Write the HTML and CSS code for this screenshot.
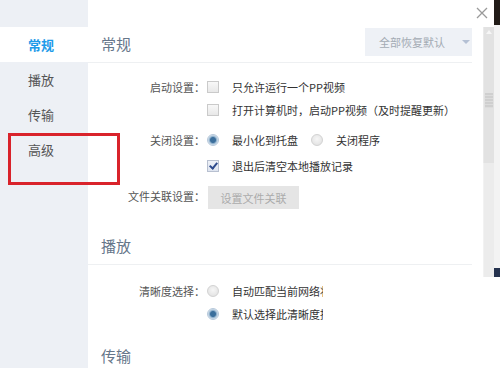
FILE: index.html
```html
<!DOCTYPE html>
<html lang="zh-CN">
<head>
  <meta charset="UTF-8" />
  <title>设置</title>
  <link rel="stylesheet" href="styles.css">
</head>
<body>
  <div class="window">
    <nav class="sidebar">
      <div class="nav-item active">常规</div>
      <div class="nav-item">播放</div>
      <div class="nav-item">传输</div>
      <div class="nav-item">高级</div>
    </nav>

    <main class="panel">
      <section class="group">
        <div class="group-head">
          <h2>常规</h2>
          <button class="reset">全部恢复默认<span class="caret"></span></button>
        </div>
        <div class="group-body">
          <div class="setting">
            <span class="label">启动设置：</span>
            <div class="opts">
              <label class="opt"><i class="box"></i>只允许运行一个PP视频</label>
              <label class="opt"><i class="box"></i>打开计算机时，启动PP视频（及时提醒更新）</label>
            </div>
          </div>
          <div class="setting">
            <span class="label">关闭设置：</span>
            <div class="opts">
              <div class="opt-line">
                <label class="opt"><i class="radio on"></i>最小化到托盘</label>
                <label class="opt"><i class="radio"></i>关闭程序</label>
              </div>
              <label class="opt spaced"><i class="box on"></i>退出后清空本地播放记录</label>
            </div>
          </div>
          <div class="setting last">
            <span class="label">文件关联设置：</span>
            <div class="opts">
              <button class="btn-gray">设置文件关联</button>
            </div>
          </div>
        </div>
      </section>

      <section class="group">
        <div class="group-head">
          <h2>播放</h2>
        </div>
        <div class="group-body play">
          <div class="setting last">
            <span class="label">清晰度选择：</span>
            <div class="opts">
              <label class="opt"><i class="radio"></i><span class="clip">自动匹配当前网络状况</span></label>
              <label class="opt"><i class="radio on"></i><span class="clip">默认选择此清晰度播放</span></label>
            </div>
          </div>
        </div>
      </section>

      <section class="group">
        <div class="group-head">
          <h2>传输</h2>
        </div>
      </section>
    </main>

    <aside class="edge">
      <div class="scrollbar">
        <div class="sb-top"></div>
        <div class="sb-track">
          <div class="sb-thumb"></div>
        </div>
        <div class="sb-rest"></div>
      </div>
      <div class="strip"></div>
    </aside>

    <svg class="close" width="12" height="12" viewBox="0 0 12 12">
      <path d="M1 1 L11 11 M11 1 L1 11" stroke="#9a9a9a" stroke-width="1.3" fill="none"/>
    </svg>
    <div class="mark"></div>
  </div>
</body>
</html>
```

FILE: styles.css
```css
html, body {
  margin: 0;
  padding: 0;
}

body {
  font-family: "Noto Sans CJK SC", "Noto Sans", sans-serif;
  background: #fff;
  color: #333;
  overflow: hidden;
}

.window {
  position: relative;
  display: flex;
  width: 500px;
  height: 368px;
  overflow: hidden;
}

/* left nav */
.sidebar {
  width: 88px;
  flex-shrink: 0;
  background: #edf0f5;
  padding-top: 27px;
}

.nav-item {
  height: 35px;
  line-height: 35px;
  padding-left: 28px;
  font-size: 13px;
  color: #555;
}

.nav-item.active {
  background: #fff;
  color: #1e9be9;
  font-weight: bold;
}

/* content */
.panel {
  width: 384px;
  padding: 27px 11px 0 0;
  flex-shrink: 0;
}

.group-head {
  display: flex;
  align-items: flex-start;
  justify-content: space-between;
  height: 35px;
  padding-left: 13px;
  border-bottom: 1px solid #eef0f2;
}

.group-head h2 {
  margin: 0;
  padding-top: 7px;
  font-size: 15px;
  line-height: 20px;
  font-weight: normal;
  color: #66768a;
}

.reset {
  margin-top: 1px;
  width: 107px;
  height: 28px;
  border: none;
  background: #eef1f6;
  color: #a3aab3;
  font-family: inherit;
  font-size: 11px;
  display: flex;
  align-items: center;
  padding: 0 0 0 14px;
  gap: 17px;
}

.caret {
  width: 0;
  height: 0;
  border-left: 4px solid transparent;
  border-right: 4px solid transparent;
  border-top: 4px solid #b4c0d4;
}

.group-body {
  padding: 14px 0 20px;
}

.group-body.play {
  padding: 16px 0 15px;
}

.setting {
  display: flex;
  margin-bottom: 10px;
}

.setting.last {
  margin-bottom: 0;
}

.label {
  width: 117px;
  flex-shrink: 0;
  text-align: right;
  font-size: 11px;
  line-height: 20px;
  color: #555;
  margin-right: 2px;
}

.opts {
  display: flex;
  flex-direction: column;
  gap: 3px;
}

.opt-line {
  display: flex;
  gap: 13px;
}

.opt {
  display: flex;
  align-items: center;
  height: 20px;
  font-size: 11px;
  color: #333;
  white-space: nowrap;
}

.opt.spaced {
  margin-top: 3px;
}

.clip {
  display: inline-block;
  width: 91px;
  overflow: hidden;
}

.box {
  width: 10px;
  height: 10px;
  border: 1px solid #cacaca;
  background: linear-gradient(#f8f8f8, #e8e8e8);
  margin-right: 13px;
  position: relative;
}

.box.on {
  background: linear-gradient(#eef1f8, #dfe5f0);
  border-color: #b8c0d0;
}

.box.on::after {
  content: "";
  position: absolute;
  left: 3px;
  top: 0px;
  width: 3px;
  height: 6px;
  border: solid #2d4a8c;
  border-width: 0 2px 2px 0;
  transform: rotate(40deg);
}

.radio {
  width: 10px;
  height: 10px;
  border-radius: 50%;
  border: 1px solid #d2d2d2;
  background: radial-gradient(circle at 50% 40%, #f6f6f6, #dedede);
  margin-right: 13px;
}

.radio.on {
  border-color: #b6c8da;
  background: radial-gradient(circle, #3b6f9c 0, #3b6f9c 2.5px, #8fb0cc 3.5px, #d8e4ee 5px);
}

.btn-gray {
  width: 91px;
  height: 23px;
  margin-left: 1px;
  border: none;
  background: #e5e5e5;
  color: #ababab;
  font-family: inherit;
  font-size: 11px;
  padding: 0;
}

/* right edge: scrollbar and the window behind */
.edge {
  display: flex;
  width: 17px;
}

.scrollbar {
  width: 11px;
  display: flex;
  flex-direction: column;
}

.sb-top {
  height: 27px;
}

.sb-track {
  height: 136px;
  background: #e2e2e2;
  border-left: 1px solid #eaeaea;
  position: relative;
}

.sb-track::before {
  content: "";
  position: absolute;
  left: 2px;
  top: 3px;
  border-left: 3px solid transparent;
  border-right: 3px solid transparent;
  border-bottom: 4px solid #f6f6f6;
}

.sb-thumb {
  position: absolute;
  left: 1px;
  top: 66px;
  width: 8px;
  height: 15px;
  background: repeating-linear-gradient(#cfcfcf 0, #cfcfcf 2px, #dcdcdc 2px, #dcdcdc 3px);
}

.sb-rest {
  height: 114px;
  background: #ececec;
  border-left: 1px solid #f2f2f2;
}

.strip {
  width: 6px;
  height: 277px;
  background: linear-gradient(#221c18 0, #221c18 25px, #f3f3f3 25px, #f3f3f3 268px, #25324e 268px);
}

.close {
  position: absolute;
  left: 476px;
  top: 7px;
}

.mark {
  position: absolute;
  left: 8px;
  top: 133px;
  width: 106px;
  height: 46px;
  border: 3px solid #d9232b;
}
```
